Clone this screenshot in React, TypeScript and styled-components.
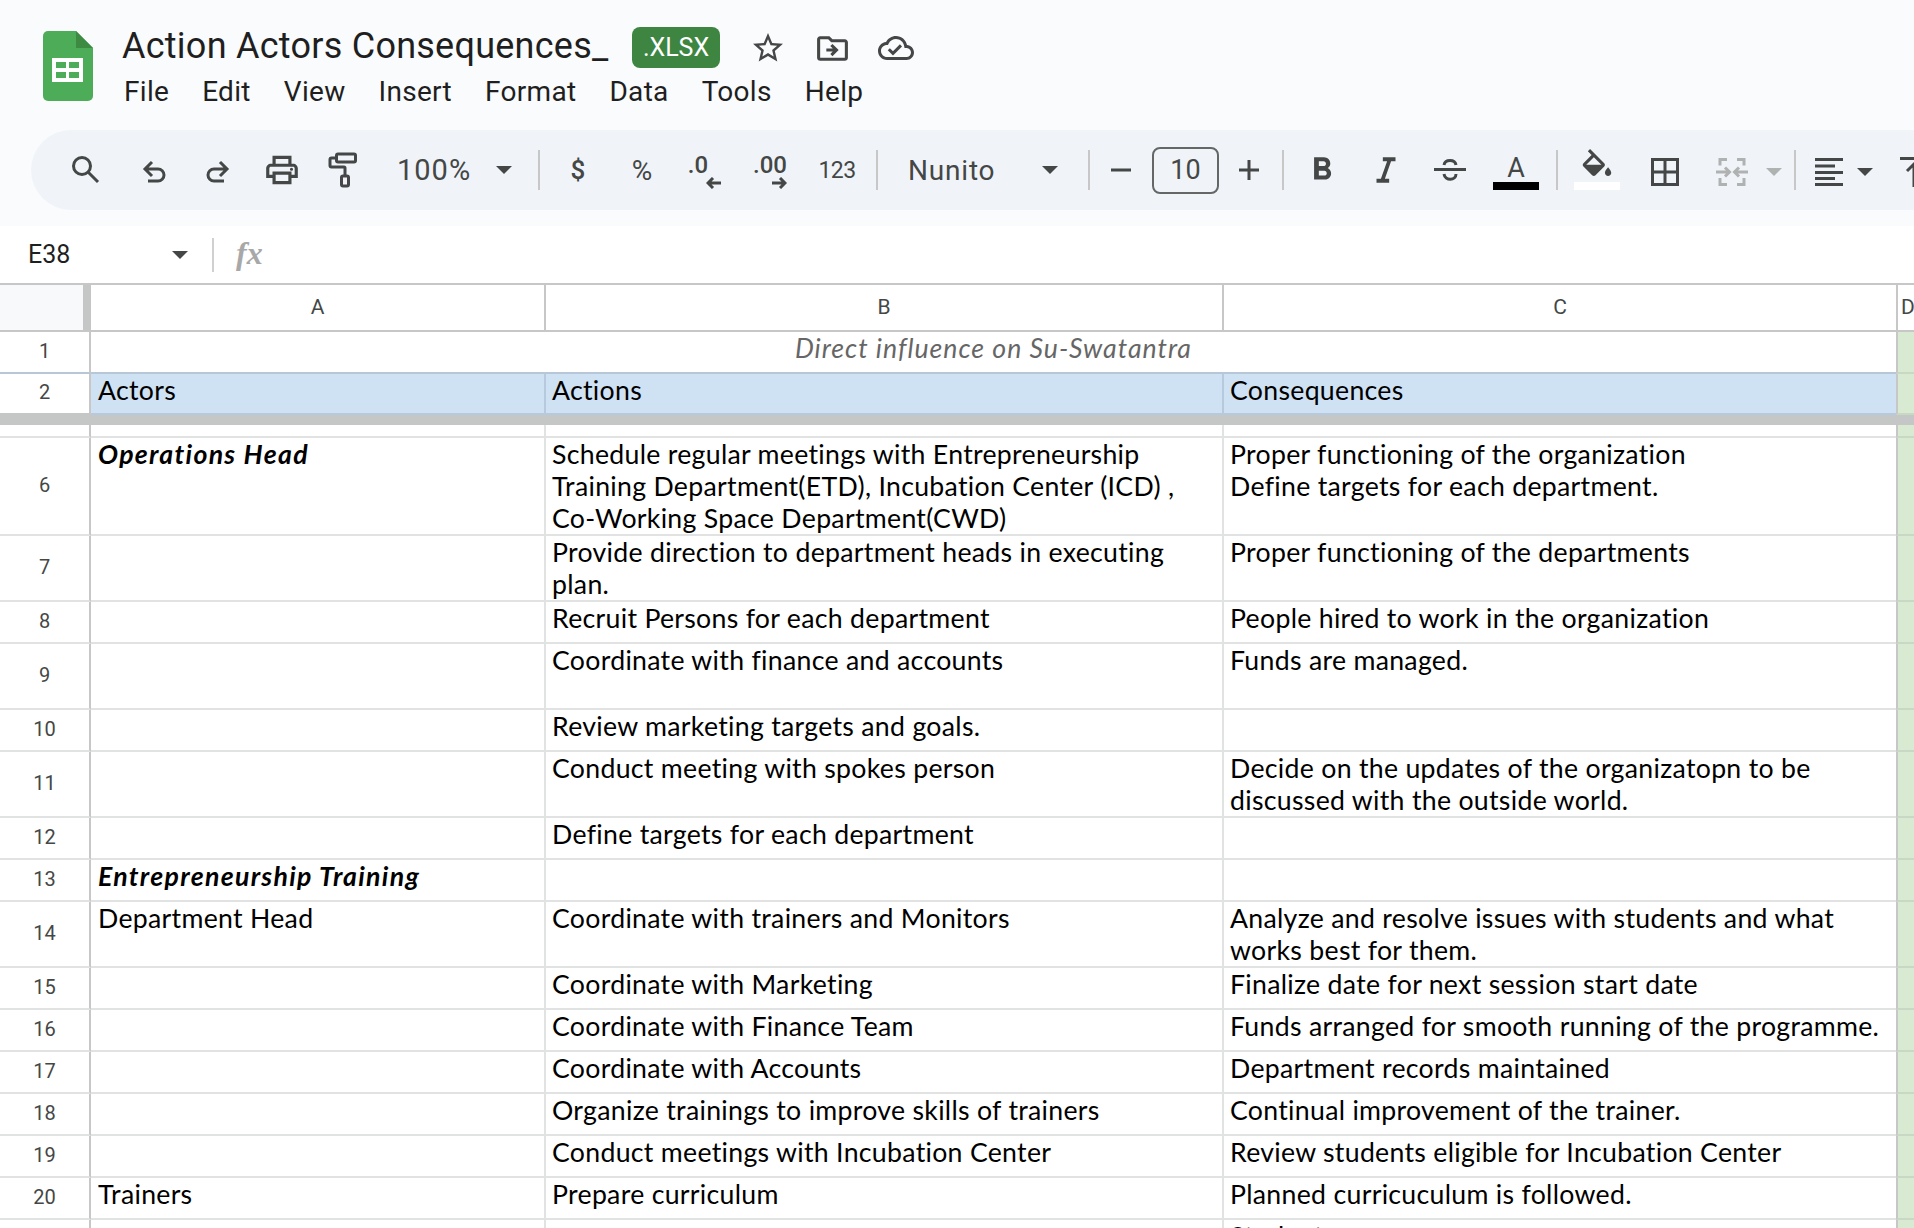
import React from 'react';
import styled, { createGlobalStyle } from 'styled-components';

const Global = createGlobalStyle`
  html, body { margin: 0; padding: 0; background: #fff; overflow: hidden; }
  #root { width: 1914px; height: 1228px; overflow: hidden; }
`;

const ICON = '#444746';
const UI = '"Roboto", "Liberation Sans", sans-serif';
const SHEET = '"Lato", "Open Sans", sans-serif';

const Page = styled.div`
  width: 1914px;
  height: 1228px;
  overflow: hidden;
  display: flex;
  flex-direction: column;
  background: #fff;
  font-family: ${UI};
`;

const Chrome = styled.header`
  height: 226px;
  flex: none;
  background: #f9fbfd;
  display: flex;
  flex-direction: column;
  padding-top: 22px;
  box-sizing: border-box;
`;

const TitleArea = styled.div`
  height: 108px;
  flex: none;
  display: flex;
  padding-left: 43px;
`;

const LogoSlot = styled.div`
  width: 50px;
  margin-top: 9px;
  margin-right: 29px;
`;

const TitleColumn = styled.div`
  display: flex;
  flex-direction: column;
`;

const TitleRow = styled.div`
  display: flex;
  align-items: center;
  height: 50px;
`;

const Title = styled.div`
  font-size: 36px;
  width: 510px;
  color: #1f1f1f;
  letter-spacing: 0.25px;
  margin-top: -2px;
  white-space: nowrap;
`;

const Badge = styled.div`
  width: 88px;
  height: 41px;
  background: #3d8541;
  border-radius: 8px;
  color: #fff;
  font-size: 25px;
  display: flex;
  align-items: center;
  justify-content: center;
`;

const TitleIcon = styled.div<{ $w: number }>`
  width: ${(p) => p.$w}px;
  display: flex;
  justify-content: center;
  align-items: center;
  margin-top: 2px;
`;

const Menu = styled.nav`
  display: flex;
  gap: 33px;
  margin-top: 2px;
  padding-left: 2px;
`;

const MenuItem = styled.span`
  font-size: 28px;
  line-height: 36px;
  letter-spacing: 0.3px;
  color: #1f1f1f;
`;

const Toolbar = styled.div`
  margin-left: 31px;
  height: 80px;
  flex: none;
  background: #f0f4f9;
  border-radius: 40px 0 0 40px;
  display: flex;
  align-items: center;
  overflow: hidden;
  padding-left: 22px;
`;

const Slot = styled.div<{ $w: number; $ml?: number; $mt?: number }>`
  width: ${(p) => p.$w}px;
  margin-left: ${(p) => p.$ml ?? 0}px;
  padding-top: ${(p) => p.$mt ?? 0}px;
  box-sizing: border-box;
  flex: none;
  height: 80px;
  display: flex;
  align-items: center;
  justify-content: center;
  color: ${ICON};
`;

const TextSlot = styled(Slot)<{ $pad: number; $padR: number }>`
  justify-content: space-between;
  padding-left: ${(p) => p.$pad}px;
  padding-right: ${(p) => p.$padR}px;
`;

const Sep = styled.div<{ $ml?: number }>`
  width: 2px;
  height: 40px;
  flex: none;
  background: #c7c7c7;
  margin-left: ${(p) => p.$ml ?? 0}px;
`;

const ToolText = styled.span<{ $size: number; $weight?: number; $track?: number }>`
  font-size: ${(p) => p.$size}px;
  font-weight: ${(p) => p.$weight ?? 400};
  letter-spacing: ${(p) => p.$track ?? 0}px;
  color: ${ICON};
  white-space: nowrap;
`;

const DecimalStack = styled.div`
  display: flex;
  flex-direction: column;
  align-items: flex-end;
  margin-top: 2px;
`;

const DecimalText = styled.span<{ $mr?: number }>`
  font-size: 24px;
  line-height: 24px;
  margin-right: ${(p) => p.$mr ?? 0}px;
  color: ${ICON};
  font-weight: 500;
`;

const SizeBox = styled.div`
  width: 67px;
  height: 47px;
  flex: none;
  box-sizing: border-box;
  border: 2px solid #646766;
  border-radius: 8px;
  display: flex;
  align-items: center;
  justify-content: center;
  font-size: 27px;
  color: ${ICON};
`;

const ColorTool = styled.div`
  display: flex;
  flex-direction: column;
  align-items: center;
  width: 46px;
  height: 80px;
  box-sizing: border-box;
  padding-top: 19px;
  position: relative;
`;

const ColorLetter = styled.span`
  font-size: 27px;
  line-height: 34px;
  margin-top: 2px;
  color: ${ICON};
`;

const ColorBar = styled.div<{ $c: string }>`
  position: absolute;
  left: 0;
  top: 52px;
  width: 46px;
  height: 8px;
  background: ${(p) => p.$c};
`;

const FormulaBar = styled.div`
  height: 57px;
  flex: none;
  display: flex;
  align-items: center;
  background: #fff;
`;

const NameBox = styled.div`
  width: 212px;
  flex: none;
  display: flex;
  align-items: center;
  justify-content: space-between;
  box-sizing: border-box;
  padding: 0 24px 0 28px;
  font-size: 25px;
  color: #1f1f1f;
`;

const FormulaSep = styled.div`
  width: 2px;
  height: 34px;
  background: #d0d0d0;
`;

const Fx = styled.span`
  font-family: "Liberation Serif", serif;
  font-style: italic;
  font-size: 32px;
  font-weight: 700;
  color: #a8a8a8;
  margin-left: 22px;
  margin-top: -2px;
`;

const Sheet = styled.div`
  flex: 1;
  border-top: 2px solid #c7c7c7;
  overflow: hidden;
`;

const Columns = '91px 455px 678px 674px 16px';

const HeaderRow = styled.div`
  display: grid;
  grid-template-columns: ${Columns};
  height: 47px;
`;

const Corner = styled.div`
  background: #f8f9fa;
  border-right: 8px solid #c4c7c5;
  border-bottom: 2px solid #c7c7c7;
`;

const ColHead = styled.div<{ $narrow?: boolean }>`
  box-sizing: border-box;
  border-right: 2px solid #c7c7c7;
  border-bottom: 2px solid #c7c7c7;
  display: flex;
  align-items: center;
  justify-content: ${(p) => (p.$narrow ? 'flex-start' : 'center')};
  padding-left: ${(p) => (p.$narrow ? 3 : 0)}px;
  padding-bottom: 2px;
  font-size: 21px;
  color: #444746;
  overflow: hidden;
  &:last-child { border-right: 0; }
`;

const Row = styled.div<{ $h: number }>`
  display: grid;
  grid-template-columns: ${Columns};
  height: ${(p) => p.$h}px;
`;

const RowNum = styled.div<{ $line?: string }>`
  box-sizing: border-box;
  border-right: 2px solid #c7c7c7;
  border-bottom: 2px solid ${(p) => p.$line ?? '#c7c7c7'};
  display: flex;
  align-items: center;
  justify-content: center;
  padding-bottom: 3px;
  font-size: 20px;
  color: #444746;
`;

const Cell = styled.div<{ $bg?: string; $line?: string; $emph?: boolean; $span?: number; $first?: boolean }>`
  box-sizing: border-box;
  ${(p) => (p.$span ? `grid-column: span ${p.$span};` : '')}
  background: ${(p) => p.$bg ?? '#fff'};
  border-right: 2px solid ${(p) => p.$line ?? '#e1e3e3'};
  border-bottom: 2px solid ${(p) => p.$line ?? '#e1e3e3'};
  padding: 0 0 0 ${(p) => (p.$first ? 7 : 6)}px;
  font-family: ${SHEET};
  font-size: 26.67px;
  line-height: 32px;
  letter-spacing: ${(p) => (p.$emph ? 1.3 : 0.3)}px;
  color: #000;
  white-space: pre;
  overflow: hidden;
  font-weight: ${(p) => (p.$emph ? 700 : 400)};
  font-style: ${(p) => (p.$emph ? 'italic' : 'normal')};
`;

const MergedTitle = styled(Cell)`
  text-align: center;
  font-style: italic;
  letter-spacing: 1px;
  color: #666;
  padding-left: 0;
  padding-right: 0;
`;

const SideCell = styled.div`
  background: #d9ead3;
  border-left: 2px solid #c7c7c7;
  margin-left: -2px;
  border-bottom: 2px solid #c9d8c4;
`;

const FreezeBar = styled.div`
  height: 10px;
  flex: none;
  background: #c4c7c5;
`;

const Svg = styled.svg<{ $disabled?: boolean }>`
  display: block;
  flex: none;
  fill: ${(p) => (p.$disabled ? '#b0b2b1' : ICON)};
`;

const Line = styled.svg<{ $muted?: boolean; $stroke?: number }>`
  display: block;
  flex: none;
  fill: none;
  stroke: ${(p) => (p.$muted ? '#b0b2b1' : ICON)};
  stroke-width: ${(p) => p.$stroke ?? 3};
`;

const Caret = ({ muted }: { muted?: boolean }) => (
  <Svg $disabled={muted} width="16" height="8" viewBox="0 0 16 8">
    <path d="M0 0h16L8 8z" />
  </Svg>
);

const MatIcon = ({ d, size, disabled }: { d: string; size: number; disabled?: boolean }) => (
  <Svg $disabled={disabled} width={size} height={size} viewBox="0 0 24 24" fillRule="evenodd">
    <path d={d} />
  </Svg>
);

const Logo = () => (
  <Svg width="50" height="70" viewBox="0 0 50 70">
    <path d="M5 0h28l17 17v48a5 5 0 0 1-5 5H5a5 5 0 0 1-5-5V5a5 5 0 0 1 5-5z" fill="#4dac57" />
    <path d="M33 0l17 17H33z" fill="#3d8a42" />
    <path fillRule="evenodd" fill="#fff" d="M9 27h31v24H9zM13 31v6h10v-6zM26 31v6h10v-6zM13 41v6h10v-6zM26 41v6h10v-6z" />
  </Svg>
);

const Paths = {
  star: 'M22 9.24l-7.19-.62L12 2 9.19 8.63 2 9.24l5.46 4.73L5.82 21 12 17.27 18.18 21l-1.63-7.03L22 9.24zM12 15.4l-3.76 2.27 1-4.28-3.32-2.88 4.38-.38L12 6.1l1.71 4.04 4.38.38-3.32 2.88 1 4.28L12 15.4z',
  folder: 'M20 6h-8l-2-2H4c-1.1 0-2 .9-2 2v12c0 1.1.9 2 2 2h16c1.1 0 2-.9 2-2V8c0-1.1-.9-2-2-2zM20 18H4V6h5.17l2 2H20v10zM11.99 9l-1.41 1.41L12.16 12H8v2h4.16l-1.59 1.59L11.99 17 16 13.01 11.99 9z',
  cloud: 'M19.35 10.04C18.67 6.59 15.64 4 12 4 9.11 4 6.6 5.64 5.35 8.04 2.34 8.36 0 10.91 0 14c0 3.31 2.69 6 6 6h13c2.76 0 5-2.24 5-5 0-2.64-2.05-4.78-4.65-4.96zM19 18H6c-2.21 0-4-1.79-4-4 0-2.05 1.53-3.76 3.56-3.97l1.07-.11.5-.95C8.08 7.14 9.94 6 12 6c2.62 0 4.88 1.86 5.39 4.43l.3 1.5 1.53.11c1.56.1 2.78 1.41 2.78 2.96 0 1.65-1.35 3-3 3zM10 14.18l-2.09-2.09L6.5 13.5 10 17l6.01-6.01-1.41-1.41z',
  print: 'M19 8h-1V3H6v5H5c-1.66 0-3 1.34-3 3v6h4v4h12v-4h4v-6c0-1.66-1.34-3-3-3zM8 5h8v3H8V5zM16 19H8v-4h8v4zM18 15v-2H6v2H4v-4c0-.55.45-1 1-1h14c.55 0 1 .45 1 1v4h-2zM18 10.5a1 1 0 1 0 0 2 1 1 0 0 0 0-2z',
  bold: 'M15.6 10.79c.97-.67 1.65-1.77 1.65-2.79 0-2.26-1.75-4-4-4H7v14h7.04c2.09 0 3.71-1.7 3.71-3.79 0-1.52-.86-2.82-2.15-3.42zM10 6.5h3c.83 0 1.5.67 1.5 1.5s-.67 1.5-1.5 1.5h-3v-3zM13.5 15.5H10v-3h3.5c.83 0 1.5.67 1.5 1.5s-.67 1.5-1.5 1.5z',
  italic: 'M10 4v2.500h2.710l-3.920 11H6V20h8v-2.500h-2.710l3.920-11H18V4z',
  fill: 'M16.56 8.94L7.62 0 6.21 1.41l2.38 2.38-5.15 5.15c-.59.59-.59 1.54 0 2.12l5.5 5.5c.29.29.68.44 1.06.44s.77-.15 1.06-.44l5.5-5.5c.59-.58.59-1.53 0-2.12zM5.21 10L10 5.21 14.79 10H5.21zM19 11.5s-2 2.17-2 3.5c0 1.1.9 2 2 2s2-.9 2-2c0-1.33-2-3.5-2-3.5z',
};

const SearchIcon = () => (
  <Line width="30" height="30" viewBox="0 0 30 30">
    <circle cx="12" cy="11" r="8.5" />
    <path d="M18 17l10 10" />
  </Line>
);

const UndoIcon = ({ flip }: { flip?: boolean }) => (
  <Line width="24" height="24" viewBox="0 0 24 24" transform={flip ? 'scale(-1 1)' : undefined}>
    <path d="M10 2L3 9l7 7M3 9h13a6 6 0 0 1 0 12H6" />
  </Line>
);

const RollerIcon = () => (
  <Line width="30" height="36" viewBox="0 0 30 36">
    <rect x="8.5" y="2" width="19" height="8" rx="1.5" />
    <path d="M8 6H3.5a1.5 1.5 0 0 0-1.5 1.5v6a1.5 1.5 0 0 0 1.5 1.5H16a1 1 0 0 1 1 1v8" />
    <rect x="13.5" y="24" width="7" height="10" rx="1.5" />
  </Line>
);

const Arrow = ({ right }: { right?: boolean }) => (
  <Line width="16" height="12" viewBox="0 0 16 12" transform={right ? undefined : 'scale(-1 1)'}>
    <path d="M1 6h13M9 1l5 5-5 5" />
  </Line>
);

const StrikeIcon = () => (
  <Line width="32" height="26" viewBox="0 0 32 26">
    <path d="M0 12.5h32M10 8c1-6 11-6 12 0M10 17c1 7 12 7 12 0" />
  </Line>
);

const BordersIcon = () => (
  <Line width="28" height="28" viewBox="0 0 28 28">
    <path d="M1.5 1.5h25v25h-25zM14 1.5v25M1.5 14h25" />
  </Line>
);

const MergeIcon = () => (
  <Line $muted width="32" height="28" viewBox="0 0 32 28">
    <path d="M11 1.5H4v6M4 20v6.500h7M21 1.500h7v6M28 20v6.500h-7M0 14h13M9 9.500l4.500 4.500-4.500 4.500M32 14H19M23 9.500L18.500 14l4.500 4.500" />
  </Line>
);

const AlignIcon = () => (
  <Line width="28" height="28" viewBox="0 0 28 28">
    <path d="M0 1.500h28M0 8h20M0 14.500h28M0 20.500h20M0 26.500h28" />
  </Line>
);

const ValignIcon = () => (
  <Line width="28" height="30" viewBox="0 0 28 30">
    <path d="M0 1.500h28M14 30V8M7 14l7-7 7 7" />
  </Line>
);

const rows: { n: number; h: number; a?: string; aEm?: boolean; b?: string; c?: string }[] = [
  { n: 6, h: 98, a: 'Operations Head', aEm: true, b: 'Schedule regular meetings with Entrepreneurship\nTraining Department(ETD), Incubation Center (ICD) ,\nCo-Working Space Department(CWD)', c: 'Proper functioning of the organization\nDefine targets for each department.' },
  { n: 7, h: 66, b: 'Provide direction to department heads in executing\nplan.', c: 'Proper functioning of the departments' },
  { n: 8, h: 42, b: 'Recruit Persons for each department', c: 'People hired to work in the organization' },
  { n: 9, h: 66, b: 'Coordinate with finance and accounts', c: 'Funds are managed.' },
  { n: 10, h: 42, b: 'Review marketing targets and goals.' },
  { n: 11, h: 66, b: 'Conduct meeting with spokes person', c: 'Decide on the updates of the organizatopn to be\ndiscussed with the outside world.' },
  { n: 12, h: 42, b: 'Define targets for each department' },
  { n: 13, h: 42, a: 'Entrepreneurship Training', aEm: true },
  { n: 14, h: 66, a: 'Department Head', b: 'Coordinate with trainers and Monitors', c: 'Analyze and resolve issues with students and what\nworks best for them.' },
  { n: 15, h: 42, b: 'Coordinate with Marketing', c: 'Finalize date for next session start date' },
  { n: 16, h: 42, b: 'Coordinate with Finance Team', c: 'Funds arranged for smooth running of the programme.' },
  { n: 17, h: 42, b: 'Coordinate with Accounts', c: 'Department records maintained' },
  { n: 18, h: 42, b: 'Organize trainings to improve skills of trainers', c: 'Continual improvement of the trainer.' },
  { n: 19, h: 42, b: 'Conduct meetings with Incubation Center', c: 'Review students eligible for Incubation Center' },
  { n: 20, h: 42, a: 'Trainers', b: 'Prepare curriculum', c: 'Planned curricuculum is followed.' },
  { n: 21, h: 66, c: 'Students' },
];

const menu = ['File', 'Edit', 'View', 'Insert', 'Format', 'Data', 'Tools', 'Help'];

export default function App() {
  return (
    <Page>
      <Global />
      <Chrome>
        <TitleArea>
          <LogoSlot><Logo /></LogoSlot>
          <TitleColumn>
            <TitleRow>
              <Title>Action Actors Consequences_</Title>
              <Badge>.XLSX</Badge>
              <TitleIcon $w={96}><MatIcon d={Paths.star} size={36} /></TitleIcon>
              <TitleIcon $w={32}><MatIcon d={Paths.folder} size={37} /></TitleIcon>
              <TitleIcon $w={96}><MatIcon d={Paths.cloud} size={36} /></TitleIcon>
            </TitleRow>
            <Menu>
              {menu.map((m) => <MenuItem key={m}>{m}</MenuItem>)}
            </Menu>
          </TitleColumn>
        </TitleArea>
        <Toolbar>
          <Slot $w={64}><SearchIcon /></Slot>
          <Slot $w={74} $mt={3}><UndoIcon /></Slot>
          <Slot $w={54} $mt={3}><UndoIcon flip /></Slot>
          <Slot $w={74}><MatIcon d={Paths.print} size={38} /></Slot>
          <Slot $w={48}><RollerIcon /></Slot>
          <TextSlot $w={171} $pad={30} $padR={26}>
            <ToolText $size={29} $track={1}>100%</ToolText>
            <Caret />
          </TextSlot>
          <Sep />
          <Slot $w={76}><ToolText $size={26} $weight={500}>$</ToolText></Slot>
          <Slot $w={52}><ToolText $size={28}>%</ToolText></Slot>
          <Slot $w={74}>
            <DecimalStack>
              <DecimalText $mr={14}>.0</DecimalText>
              <Arrow />
            </DecimalStack>
          </Slot>
          <Slot $w={56}>
            <DecimalStack>
              <DecimalText>.00</DecimalText>
              <Arrow right />
            </DecimalStack>
          </Slot>
          <Slot $w={78}><ToolText $size={23} $track={-0.6}>123</ToolText></Slot>
          <Sep />
          <TextSlot $w={210} $pad={30} $padR={30}>
            <ToolText $size={28} $track={0.8}>Nunito</ToolText>
            <Caret />
          </TextSlot>
          <Sep />
          <Slot $w={62}><Line width="20" height="4" viewBox="0 0 20 4"><path d="M0 2h20" /></Line></Slot>
          <SizeBox>10</SizeBox>
          <Slot $w={60}><Line width="20" height="20" viewBox="0 0 20 20"><path d="M0 10h20M10 0v20" /></Line></Slot>
          <Sep $ml={3} />
          <Slot $w={76}><MatIcon d={Paths.bold} size={38} /></Slot>
          <Slot $w={52}><MatIcon d={Paths.italic} size={38} /></Slot>
          <Slot $w={76}><StrikeIcon /></Slot>
          <Slot $w={56}>
            <ColorTool>
              <ColorLetter>A</ColorLetter>
              <ColorBar $c="#000" />
            </ColorTool>
          </Slot>
          <Sep $ml={12} />
          <Slot $w={78}>
            <ColorTool>
              <MatIcon d={Paths.fill} size={38} />
              <ColorBar $c="#fff" />
            </ColorTool>
          </Slot>
          <Slot $w={58} $mt={4}><BordersIcon /></Slot>
          <Slot $w={76} $mt={4}><MergeIcon /></Slot>
          <Slot $w={8} $mt={4}><Caret muted /></Slot>
          <Sep $ml={16} />
          <Slot $w={66} $mt={4}><AlignIcon /></Slot>
          <Slot $w={6} $mt={4}><Caret /></Slot>
          <Slot $w={28} $ml={32} $mt={4}><ValignIcon /></Slot>
        </Toolbar>
      </Chrome>
      <FormulaBar>
        <NameBox>
          <span>E38</span>
          <Caret />
        </NameBox>
        <FormulaSep />
        <Fx>fx</Fx>
      </FormulaBar>
      <Sheet>
        <HeaderRow>
          <Corner />
          <ColHead>A</ColHead>
          <ColHead>B</ColHead>
          <ColHead>C</ColHead>
          <ColHead $narrow>D</ColHead>
        </HeaderRow>
        <Row $h={42}>
          <RowNum $line="#b7c7d8">1</RowNum>
          <MergedTitle $span={3} $line="#b7c7d8">Direct influence on Su-Swatantra</MergedTitle>
          <SideCell />
        </Row>
        <Row $h={41}>
          <RowNum $line="#c4c7c5">2</RowNum>
          <Cell $first $bg="#cfe2f3" $line="#b7c9dc">Actors</Cell>
          <Cell $bg="#cfe2f3" $line="#b7c9dc">Actions</Cell>
          <Cell $bg="#cfe2f3" $line="#b7c9dc">Consequences</Cell>
          <SideCell />
        </Row>
        <FreezeBar />
        <Row $h={13}>
          <RowNum $line="#e1e3e3" />
          <Cell />
          <Cell />
          <Cell />
          <SideCell />
        </Row>
        {rows.map((r) => (
          <Row key={r.n} $h={r.h}>
            <RowNum $line="#e1e3e3">{r.n}</RowNum>
            <Cell $first $emph={r.aEm}>{r.a}</Cell>
            <Cell>{r.b}</Cell>
            <Cell>{r.c}</Cell>
            <SideCell />
          </Row>
        ))}
      </Sheet>
    </Page>
  );
}
